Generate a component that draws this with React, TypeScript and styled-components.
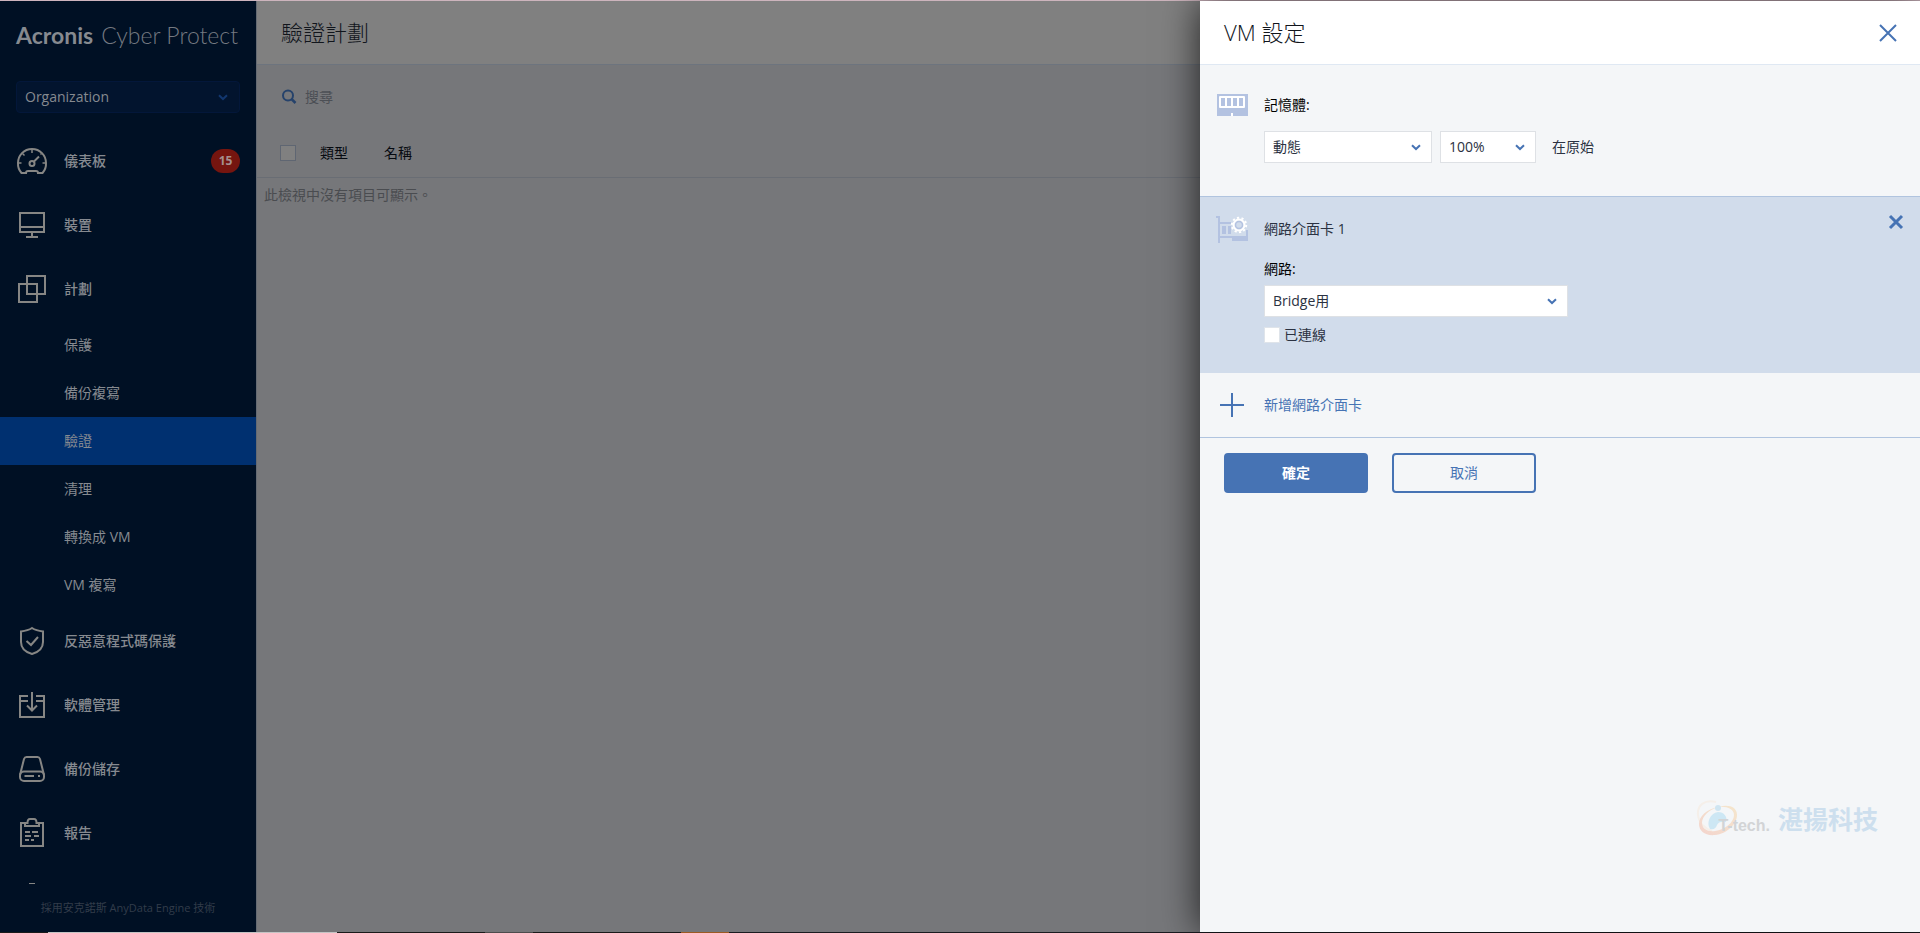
import React from "react";
import styled, { createGlobalStyle } from "styled-components";

const GlobalStyle = createGlobalStyle`
  *, *::before, *::after { box-sizing: border-box; }
  body {
    margin: 0;
    font-family: "Open Sans", "Noto Sans CJK TC", sans-serif;
    font-size: 14px;
    line-height: 20px;
    color: #2b3242;
  }
  button, input, select { font: inherit; color: inherit; }
  svg { display: block; flex: none; }
`;

const blue = "#4673b4";

/* ---------- page frame ---------- */

const Page = styled.div`
  display: flex;
  flex-direction: column;
  height: 100vh;
  background: #76777a;
`;

const TopEdge = styled.div`
  flex: none;
  height: 1px;
  background: #cdb4bd;
`;

const BottomEdge = styled.div`
  flex: none;
  height: 1px;
  background: linear-gradient(
    to right,
    #1a1a1a 48px,
    #c4c4c4 48px 337px,
    #1a1a1a 337px 485px,
    #4c4c4c 485px 533px,
    #1a1a1a 533px 681px,
    #9c5a22 681px 729px,
    #1a1b20 729px
  );
`;

const Columns = styled.div`
  display: flex;
  flex: 1;
  min-height: 0;
`;

/* ---------- sidebar ---------- */

const Sidebar = styled.aside`
  display: flex;
  flex-direction: column;
  flex: none;
  width: 256px;
  background: #001024;
  color: #868a90;
`;

const Brand = styled.div`
  display: flex;
  align-items: center;
  gap: 8px;
  height: 68px;
  padding: 0 16px;
  font-family: Lato, sans-serif;
  font-size: 23px;
  line-height: 32px;
  white-space: nowrap;
`;

const BrandStrong = styled.span`
  font-weight: 700;
`;

const BrandThin = styled.span`
  color: #747981;
  font-weight: 300;
`;

const OrgField = styled.div`
  position: relative;
  margin: 12px 16px 16px;
`;

const OrgSelect = styled.select`
  display: block;
  appearance: none;
  width: 100%;
  height: 32px;
  padding: 0 32px 0 8px;
  border: 1px solid #03173a;
  border-radius: 4px;
  background: #02142e;
  color: #868a90;
`;

const Chevron = styled.svg<{ $right: number }>`
  position: absolute;
  top: 50%;
  right: ${(p) => p.$right}px;
  margin-top: -3px;
  pointer-events: none;
`;

const Nav = styled.nav`
  flex: 1;
  min-height: 0;
  overflow: hidden;
`;

const NavItem = styled.a`
  display: flex;
  align-items: center;
  gap: 16px;
  height: 64px;
  padding: 0 16px;
  color: inherit;
  font-weight: 500;
  text-decoration: none;
`;

const NavLabel = styled.span`
  flex: 1;
`;

const Badge = styled.span`
  width: 29px;
  border-radius: 12px;
  background: #75150f;
  color: #a5908f;
  font-size: 12px;
  line-height: 24px;
  font-weight: 700;
  text-align: center;
`;

const SubItem = styled.a<{ $active?: boolean }>`
  display: flex;
  align-items: center;
  height: 48px;
  padding: 0 16px 0 64px;
  background: ${(p) => (p.$active ? "#003070" : "transparent")};
  color: inherit;
  text-decoration: none;
`;

const PartialItem = styled.a`
  display: block;
  height: 20px;
  padding: 0 16px;
  color: inherit;
`;

const Tagline = styled.footer`
  flex: none;
  height: 34px;
  color: #323c4a;
  font-size: 11px;
  line-height: 20px;
  text-align: center;
`;

/* ---------- dimmed content ---------- */

const Content = styled.main`
  flex: 1;
  min-width: 0;
  border-left: 1px solid #646a73;
  color: #14181f;
`;

const TitleBar = styled.header`
  display: flex;
  align-items: center;
  height: 64px;
  padding: 0 24px;
  background: #808080;
  border-bottom: 1px solid #6d747e;
`;

const PageTitle = styled.h1`
  margin: 0;
  padding-bottom: 2px;
  color: #11151c;
  font-size: 22px;
  line-height: 32px;
  font-weight: 300;
`;

const SearchBar = styled.label`
  display: flex;
  align-items: center;
  gap: 8px;
  height: 64px;
  padding: 0 24px;
`;

const SearchInput = styled.input`
  flex: 1;
  min-width: 0;
  padding: 0;
  border: 0;
  outline: 0;
  background: transparent;
  &::placeholder { color: #4c4f55; opacity: 1; }
`;

const PlanTable = styled.table`
  width: 100%;
  border-collapse: separate;
  border-spacing: 0;
  table-layout: fixed;
`;

const HeadCell = styled.th<{ $width?: number; $indent?: number }>`
  width: ${(p) => (p.$width ? `${p.$width}px` : "auto")};
  height: 49px;
  padding: 0 0 0 ${(p) => p.$indent ?? 0}px;
  border-bottom: 1px solid #696d74;
  color: #060a10;
  font-weight: 400;
  text-align: left;
`;

const EmptyCell = styled.td`
  height: 34px;
  padding: 0 7px;
  color: #4a4c50;
`;

const CheckBox = styled.input<{ $dim?: boolean }>`
  display: block;
  appearance: none;
  flex: none;
  width: 16px;
  height: 16px;
  margin: 0;
  border: 1px solid ${(p) => (p.$dim ? "#5f6672" : "#dfe4ea")};
  background: ${(p) => (p.$dim ? "#808080" : "#fff")};
`;

/* ---------- settings drawer ---------- */

const Drawer = styled.section`
  position: relative;
  flex: none;
  width: 720px;
  max-width: 100%;
  background: #f4f6f8;
  box-shadow: 0 0 36px rgba(0, 0, 0, 0.75);
`;

const DrawerHeader = styled.header`
  display: flex;
  align-items: center;
  justify-content: space-between;
  height: 64px;
  padding: 0 23px 0 24px;
  background: #fff;
  border-bottom: 1px solid #dfe8f3;
`;

const IconButton = styled.button`
  display: block;
  padding: 0;
  border: 0;
  background: none;
  color: ${blue};
`;

const Section = styled.div<{ $tinted?: boolean }>`
  display: grid;
  grid-template-columns: 32px 1fr auto;
  column-gap: 16px;
  align-items: start;
  padding: ${(p) => (p.$tinted ? "16px 15px 28px 16px" : "28px 16px 33px")};
  background: ${(p) => (p.$tinted ? "#d1dceb" : "transparent")};
  border-top: ${(p) => (p.$tinted ? "1px solid #b0c4df" : "0")};
`;

const Fields = styled.div`
  display: flex;
  flex-direction: column;
`;

const FieldLabel = styled.label`
  height: 20px;
  color: #000;
`;

const MemoryLabel = styled(FieldLabel)`
  margin: 2px 0 16px;
`;

const NetworkLabel = styled(FieldLabel)`
  margin-bottom: 6px;
`;

const CardName = styled.h3`
  margin: 6px 0 20px;
  font-size: 14px;
  line-height: 20px;
  font-weight: 400;
`;

const MemoryRow = styled.div`
  display: flex;
  align-items: center;
  gap: 8px;
`;

const Suffix = styled.span`
  margin-left: 8px;
`;

const SelectBox = styled.div<{ $width: number }>`
  position: relative;
  width: ${(p) => p.$width}px;
`;

const Select = styled.select`
  display: block;
  appearance: none;
  width: 100%;
  height: 32px;
  padding: 0 28px 0 8px;
  border: 1px solid #dee1e5;
  border-radius: 0;
  background: #fff;
`;

const ConnectedLabel = styled.label`
  display: flex;
  align-items: center;
  gap: 4px;
  margin-top: 8px;
`;

const AddButton = styled.button`
  display: flex;
  align-items: center;
  gap: 16px;
  width: 100%;
  height: 65px;
  padding: 0 16px;
  border: 0;
  border-bottom: 1px solid #b0c4df;
  background: none;
  color: ${blue};
  text-align: left;
`;

const Actions = styled.div`
  display: flex;
  gap: 24px;
  padding: 15px 24px;
`;

const ActionButton = styled.button<{ $primary?: boolean }>`
  width: 144px;
  height: 40px;
  padding: 0;
  border: 2px solid ${blue};
  border-radius: 4px;
  background: ${(p) => (p.$primary ? blue : "transparent")};
  color: ${(p) => (p.$primary ? "#fff" : blue)};
  font-weight: ${(p) => (p.$primary ? 700 : 400)};
`;

const Watermark = styled.div`
  position: absolute;
  right: 42px;
  bottom: 94px;
  display: flex;
  align-items: center;
`;

const WatermarkLatin = styled.span`
  position: relative;
  margin: 14px 8px 0 -20px;
  color: #d2d4d6;
  font-family: "Liberation Sans", sans-serif;
  font-size: 16px;
  font-weight: 700;
`;

const WatermarkHan = styled.span`
  color: #cddfee;
  font-size: 25px;
  line-height: 36px;
  font-weight: 700;
`;

/* ---------- icons ---------- */

function Down({ color, right }: { color: string; right: number }) {
  return (
    <Chevron $right={right} width="10" height="7" viewBox="0 0 10 7" fill="none" stroke={color} strokeWidth="2" aria-hidden>
      <path d="M1 1.2 5 5 9 1.2" />
    </Chevron>
  );
}

function Cross({ inset, weight }: { inset: number; weight: number }) {
  const far = 18 - inset;
  return (
    <svg width="18" height="18" viewBox="0 0 18 18" stroke="currentColor" strokeWidth={weight} aria-hidden>
      <path d={`M${inset} ${inset} ${far} ${far}M${far} ${inset} ${inset} ${far}`} />
    </svg>
  );
}

function NavIcon({ children }: { children: React.ReactNode }) {
  return (
    <svg width="32" height="32" viewBox="0 0 32 32" fill="none" stroke="#868684" strokeWidth="2" aria-hidden>
      {children}
    </svg>
  );
}

const GaugeIcon = (
  <NavIcon>
    <path d="M5.5 28A14 14 0 0 1 2 18C2 10.300 8 4 16 4s14 6.300 14 14a14 14 0 0 1-3.500 10H22c0-1.500-1-2-2-2h-8c-1 0-2 .5-2 2z" />
    <circle cx="16" cy="18.500" r="2.500" />
    <path d="m18 16.500 5-5" />
    <path strokeWidth="1.500" d="M16 4v4M2 18h3.500M26.500 18H30M6.500 8.500l2 2M25.500 8.500l-1 1" />
  </NavIcon>
);

const MonitorIcon = (
  <NavIcon>
    <path d="M4 4h24v19H4zM4 18h24M16 23v5M10 28h12" />
  </NavIcon>
);

const PlansIcon = (
  <NavIcon>
    <path d="M11 3h18v18H11zM3 11h18v18H3z" />
  </NavIcon>
);

const ShieldIcon = (
  <NavIcon>
    <path d="M16 3c3 2 7 3 11 3.500V17c0 6-4 10-11 12C9 27 5 23 5 17V6.500C9 6 13 5 16 3z" />
    <path d="m10.500 16 4.500 4 7-8" />
  </NavIcon>
);

const SoftwareIcon = (
  <NavIcon>
    <path d="M12 7H4v21h24V7h-8M4 12h8M20 12h8M16 3v18M11 16.500l5 5 5-5" />
  </NavIcon>
);

const StorageIcon = (
  <NavIcon>
    <path d="M4 22 8 6c.5-1.500 1-2 2.500-2h11c1.500 0 2 .5 2.500 2l4 16" />
    <rect x="4" y="18.500" width="24" height="9.500" rx="4" />
    <path d="M8.500 23H18M22 23h2" />
  </NavIcon>
);

const ReportIcon = (
  <NavIcon>
    <path d="M9 6H5v23h22V6h-4" />
    <path d="M9 9V6h2.500c0-2.500 1-4 2.500-4h4c1.500 0 2.500 1.500 2.500 4H23v3z" />
    <path d="M9 15h5M16 15h6M9 19h6M18 19h5M9 23h4M15 23h3" />
  </NavIcon>
);

function MemoryIcon() {
  return (
    <svg width="32" height="24" viewBox="-1 -1 32 24" aria-hidden>
      <path fill="#b3c2e1" d="M0 0h31v22H0z" />
      <path fill="#fff" d="M2 3a1 1 0 0 1 1-1h24a1 1 0 0 1 1 1v10a1 1 0 0 1-1 1H3a1 1 0 0 1-1-1zM14 19h2v3h-2z" />
      <path fill="#b3c2e1" d="M4 4h4v8H4zM10 4h4v8h-4zM16 4h4v8h-4zM22 4h4v8h-4z" />
    </svg>
  );
}

function NetworkCardIcon() {
  return (
    <svg width="32" height="32" viewBox="0 -3 32 32" aria-hidden>
      <path
        fill="#b3c2e1"
        d="M0 0h4v6h12v2H4v12h26v-6h2v11H16v-3H4v5H2V2H0zM6 10h4v8H6zM12 10h3v8h-3z"
      />
      <circle cx="23" cy="9" r="8" fill="#d1dceb" />
      <circle cx="23" cy="9" r="3.500" fill="none" stroke="#b3c2e1" strokeWidth="1.500" />
      <circle cx="23" cy="9" r="5.500" fill="none" stroke="#fff" strokeWidth="2" />
      <circle cx="23" cy="9" r="7.200" fill="none" stroke="#fff" strokeWidth="2" strokeDasharray="2.200 2.324" />
    </svg>
  );
}

function PlusIcon() {
  return (
    <svg width="32" height="32" viewBox="0 0 32 32" stroke="currentColor" strokeWidth="2" aria-hidden>
      <path d="M16 4v24M4 16h24" />
    </svg>
  );
}

function SearchIcon() {
  return (
    <svg width="16" height="16" viewBox="0 0 16 16" fill="none" stroke="#25426b" strokeWidth="2" aria-hidden>
      <circle cx="7" cy="6.500" r="5" />
      <path strokeWidth="2.500" d="m10.500 10 4 4" />
    </svg>
  );
}

function OrbitLogo() {
  return (
    <svg width="42" height="38" viewBox="0 0 42 38" fill="none" aria-hidden>
      <defs>
        <linearGradient id="orbit" x1="1" y1="0" x2="0" y2="1">
          <stop offset="0" stopColor="#f5e6cc" />
          <stop offset="1" stopColor="#f3d4cd" />
        </linearGradient>
      </defs>
      <path stroke="#f5efe9" strokeWidth="2" d="M20 2C9-1 1 5 2 15c1 8 7 14 14 16" />
      <path
        fill="url(#orbit)"
        d="M22 7c11-3 19 0 19 8 0 9-10 19-22 20C9 36 3 31 3 24 3 16 11 9 22 7c-9 3-16 9-16 16 0 6 6 9 13 8 10-1 19-9 19-16 0-6-7-9-16-8z"
      />
      <circle cx="22" cy="8" r="3" fill="#cfe5f1" />
      <path fill="#cde7f4" d="M14 29c-4-6 0-16 8-17 6 0 10 5 8 10-4-1-8 0-9 3-1 3-3 5-7 4z" />
    </svg>
  );
}

/* ---------- data ---------- */

const planLinks = ["保護", "備份複寫", "驗證", "清理", "轉換成 VM", "VM 複寫"];

const topLinks = [
  { label: "儀表板", icon: GaugeIcon, count: 15 },
  { label: "裝置", icon: MonitorIcon },
  { label: "計劃", icon: PlansIcon },
];

const bottomLinks = [
  { label: "反惡意程式碼保護", icon: ShieldIcon },
  { label: "軟體管理", icon: SoftwareIcon },
  { label: "備份儲存", icon: StorageIcon },
  { label: "報告", icon: ReportIcon },
];

function NavRow({ label, icon, count }: { label: string; icon: React.ReactNode; count?: number }) {
  return (
    <NavItem href="#">
      {icon}
      <NavLabel>{label}</NavLabel>
      {count !== undefined && <Badge>{count}</Badge>}
    </NavItem>
  );
}

export default function App() {
  return (
    <>
      <GlobalStyle />
      <Page>
        <TopEdge />
        <Columns>
          <Sidebar>
            <Brand>
              <BrandStrong>Acronis</BrandStrong>
              <BrandThin>Cyber Protect</BrandThin>
            </Brand>
            <OrgField>
              <OrgSelect aria-label="Organization">
                <option>Organization</option>
              </OrgSelect>
              <Down color="#12376f" right={12} />
            </OrgField>
            <Nav>
              {topLinks.map((item) => (
                <NavRow key={item.label} {...item} />
              ))}
              {planLinks.map((label) => (
                <SubItem key={label} href="#" $active={label === "驗證"}>
                  {label}
                </SubItem>
              ))}
              {bottomLinks.map((item) => (
                <NavRow key={item.label} {...item} />
              ))}
              <PartialItem href="#" aria-label="設定">
                <svg width="32" height="20" viewBox="0 0 32 20" stroke="#868684">
                  <path d="M13 18.500h6" />
                </svg>
              </PartialItem>
            </Nav>
            <Tagline>採用安克諾斯 AnyData Engine 技術</Tagline>
          </Sidebar>

          <Content>
            <TitleBar>
              <PageTitle>驗證計劃</PageTitle>
            </TitleBar>
            <SearchBar>
              <SearchIcon />
              <SearchInput type="text" placeholder="搜尋" aria-label="搜尋" />
            </SearchBar>
            <PlanTable>
              <thead>
                <tr>
                  <HeadCell $width={63} $indent={23}>
                    <CheckBox type="checkbox" $dim aria-label="全選" />
                  </HeadCell>
                  <HeadCell $width={64}>類型</HeadCell>
                  <HeadCell>名稱</HeadCell>
                </tr>
              </thead>
              <tbody>
                <tr>
                  <EmptyCell colSpan={3}>此檢視中沒有項目可顯示。</EmptyCell>
                </tr>
              </tbody>
            </PlanTable>
          </Content>

          <Drawer>
            <DrawerHeader>
              <PageTitle as="h2">VM 設定</PageTitle>
              <IconButton type="button" aria-label="關閉">
                <Cross inset={1} weight={2} />
              </IconButton>
            </DrawerHeader>

            <Section>
              <MemoryIcon />
              <Fields>
                <MemoryLabel htmlFor="memory">記憶體:</MemoryLabel>
                <MemoryRow>
                  <SelectBox $width={168}>
                    <Select id="memory">
                      <option>動態</option>
                    </Select>
                    <Down color={blue} right={11} />
                  </SelectBox>
                  <SelectBox $width={96}>
                    <Select aria-label="記憶體百分比">
                      <option>100%</option>
                    </Select>
                    <Down color={blue} right={11} />
                  </SelectBox>
                  <Suffix>在原始</Suffix>
                </MemoryRow>
              </Fields>
            </Section>

            <Section $tinted>
              <NetworkCardIcon />
              <Fields>
                <CardName>網路介面卡 1</CardName>
                <NetworkLabel htmlFor="network">網路:</NetworkLabel>
                <SelectBox $width={304}>
                  <Select id="network">
                    <option>Bridge用</option>
                  </Select>
                  <Down color={blue} right={11} />
                </SelectBox>
                <ConnectedLabel>
                  <CheckBox type="checkbox" />
                  已連線
                </ConnectedLabel>
              </Fields>
              <IconButton type="button" aria-label="移除">
                <Cross inset={3} weight={3} />
              </IconButton>
            </Section>

            <AddButton type="button">
              <PlusIcon />
              新增網路介面卡
            </AddButton>

            <Actions>
              <ActionButton type="button" $primary>
                確定
              </ActionButton>
              <ActionButton type="button">取消</ActionButton>
            </Actions>

            <Watermark>
              <OrbitLogo />
              <WatermarkLatin>T-tech.</WatermarkLatin>
              <WatermarkHan>湛揚科技</WatermarkHan>
            </Watermark>
          </Drawer>
        </Columns>
        <BottomEdge />
      </Page>
    </>
  );
}
